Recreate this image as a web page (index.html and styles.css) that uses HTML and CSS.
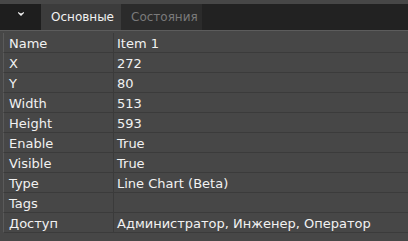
FILE: index.html
```html
<!DOCTYPE html>
<html lang="ru">
<head>
    <meta charset="UTF-8">
    <title>Свойства</title>
    <link rel="stylesheet" href="styles.css">
</head>
<body>
    <div class="panel">
        <div class="tabbar">
            <div class="toggle">
                <svg width="7" height="5" viewBox="0 0 7 5"><polygon points="0,0 3,1.5 6,0 6,1 3,4 0,1" fill="#f0f0f0"/></svg>
            </div>
            <div class="tab active">Основные</div>
            <div class="tab">Состояния</div>
        </div>

        <div class="grid">
            <div class="row"><div class="key">Name</div><div class="val">Item 1</div></div>
            <div class="row"><div class="key">X</div><div class="val">272</div></div>
            <div class="row"><div class="key">Y</div><div class="val">80</div></div>
            <div class="row"><div class="key">Width</div><div class="val">513</div></div>
            <div class="row"><div class="key">Height</div><div class="val">593</div></div>
            <div class="row"><div class="key">Enable</div><div class="val">True</div></div>
            <div class="row"><div class="key">Visible</div><div class="val">True</div></div>
            <div class="row"><div class="key">Type</div><div class="val">Line Chart (Beta)</div></div>
            <div class="row"><div class="key">Tags</div><div class="val"></div></div>
            <div class="row"><div class="key">Доступ</div><div class="val">Администратор, Инженер, Оператор</div></div>
        </div>
    </div>
</body>
</html>
```

FILE: styles.css
```css
body {
    margin: 0;
    background-color: #474747;
    font-family: "DejaVu Sans", sans-serif;
    font-size: 13px;
    color: #f2f2f2;
}
.panel {
    padding-top: 4px;
}
.tabbar {
    display: flex;
    height: 26px;
    background-color: #222222;
}
.toggle {
    width: 41px;
    background-color: #1e1e1e;
    display: flex;
    justify-content: center;
    padding-top: 8px;
    box-sizing: border-box;
}
.toggle svg {
    margin-left: 1px;
}
.tab {
    width: 81px;
    padding-left: 10px;
    box-sizing: border-box;
    font-size: 12px;
    line-height: 26px;
    background-color: #2b2b2b;
    color: #7a7a7a;
}
.tab.active {
    width: 80px;
    background-color: #3c3c3c;
    color: #f2f2f2;
}
.grid {
    border-top: 1px solid #5c5c5c;
    padding-top: 2px;
}
.row {
    display: flex;
    margin-left: 3px;
    border-left: 1px solid #5a5a5a;
    border-bottom: 1px solid #3b3b3b;
    height: 19px;
    line-height: 20px;
}
.key,
.val {
    padding-top: 1px;
    box-sizing: border-box;
}
.key {
    width: 110px;
    padding-left: 5px;
    border-right: 1px solid #3b3b3b;
}
.val {
    flex: 1;
    padding-left: 3px;
}
```
